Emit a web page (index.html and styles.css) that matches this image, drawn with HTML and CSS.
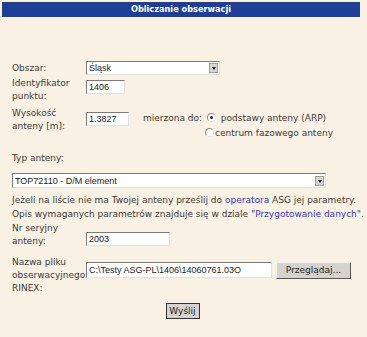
FILE: index.html
```html
<!DOCTYPE html>
<html>
<head>
    <meta charset="utf-8">
    <title>Obliczanie obserwacji</title>
    <link rel="stylesheet" href="styles.css">
</head>
<body>
<div class='title'>Obliczanie obserwacji</div>

<form class='calc'>
    <div class='row row_area'>
        <label class='lbl'>Obszar:</label>
        <div class='select area'><span>Śląsk</span><i class='arrow'></i></div>
    </div>

    <div class='row row_point'>
        <label class='lbl'>Identyfikator punktu:</label>
        <div class='field point'>1406</div>
    </div>

    <div class='row row_height'>
        <label class='lbl'>Wysokość anteny [m]:</label>
        <div class='field height'>1.3827</div>
        <span class='measured'>mierzona do:</span>
        <div class='radios'>
            <div class='radio'><i class='dot on'></i>&nbsp;podstawy anteny (ARP)</div>
            <div class='radio second'><i class='dot'></i>centrum fazowego anteny</div>
        </div>
    </div>

    <div class='type_lbl'>Typ anteny:</div>
    <div class='select antenna'><span>TOP72110 - D/M element</span><i class='arrow'></i></div>

    <p class='note'>
        Jeżeli na liście nie ma Twojej anteny prześlij do <a href='#'>operatora</a> ASG jej parametry.<br>
        Opis wymaganych parametrów znajduje się w dziale <a href='#'>"Przygotowanie danych"</a>.
    </p>

    <div class='row row_serial'>
        <label class='lbl'>Nr seryjny anteny:</label>
        <div class='field serial'>2003</div>
    </div>

    <div class='row row_file'>
        <label class='lbl'>Nazwa pliku obserwacyjnego RINEX:</label>
        <div class='field file'>C:\Testy ASG-PL\1406\14060761.03O</div>
        <div class='btn browse'>Przeglądaj...</div>
    </div>

    <div class='send'><div class='btn submit'>Wyślij</div></div>
</form>
</body>
</html>
```
FILE: styles.css
```css
body
{
    margin:0;
    background-color:#f9f2e4;
    font-family:"DejaVu Sans", Verdana, sans-serif;
    font-size:9px;
    color:#3a3a3a;
}

.title
{
    margin:2px 7px 0 2px;
    height:15px;
    line-height:15px;
    background-color:#1d3f96;
    color:white;
    font-size:8.2px;
    font-weight:bold;
    text-align:center;
}

.calc
{
    margin:0;
    padding:44px 0 0 12px;
}

.row
{
    display:flex;
    align-items:flex-start;
}

.lbl
{
    width:74px;
    flex:none;
    line-height:13px;
}

.field, .select
{
    box-sizing:border-box;
    height:14px;
    background:white;
    border:1px solid;
    border-color:#7a7a7a #e0e0e0 #e0e0e0 #7a7a7a;
    font-family:"Liberation Sans", Arial, sans-serif;
    font-size:9px;
    line-height:12px;
    padding-left:2px;
    color:#222;
    white-space:nowrap;
    overflow:hidden;
}

.select
{
    display:flex;
    justify-content:space-between;
    align-items:center;
    padding-right:1px;
}

.arrow
{
    width:9px;
    height:10px;
    background:#d8d5cf;
    border:1px solid #a09d98;
    box-sizing:border-box;
    position:relative;
}

.arrow::after
{
    content:'';
    position:absolute;
    left:2px;
    top:3px;
    border-left:2px solid transparent;
    border-right:2px solid transparent;
    border-top:3px solid #222;
}

.row_area
{
    align-items:center;
}

.area
{
    width:134px;
}

.row_point
{
    margin-top:2px;
}

.point
{
    width:39px;
    margin-top:3px;
}

.row_height
{
    margin-top:4px;
}

.height
{
    width:43px;
    margin-top:5px;
}

.measured
{
    margin:5px 0 0 14px;
    width:64px;
    line-height:13px;
}

.radios
{
    margin-top:3px;
}

.radio
{
    display:flex;
    align-items:center;
    height:15px;
}

.dot
{
    width:9px;
    height:9px;
    margin-right:2px;
    border-radius:50%;
    border:1px solid #8a8a8a;
    border-right-color:#e6e6e6;
    border-bottom-color:#e6e6e6;
    background:white;
    box-sizing:border-box;
    position:relative;
}

.second .dot
{
    margin:0 1px 0 -2px;
}

.dot.on::after
{
    content:'';
    position:absolute;
    left:2px;
    top:2px;
    width:3px;
    height:3px;
    border-radius:50%;
    background:#222;
}

.type_lbl
{
    margin-top:12px;
    line-height:13px;
}

.antenna
{
    margin-top:8px;
    width:314px;
    height:15px;
}

.note
{
    margin:5px 0 0 0;
    line-height:14px;
}

.note a
{
    color:#3535c8;
    text-decoration:none;
}

.row_serial
{
    margin-top:1px;
}

.serial
{
    width:84px;
    margin-top:10px;
}

.row_file
{
    margin-top:8px;
}

.file
{
    width:186px;
    height:16px;
    line-height:14px;
    margin-top:6px;
}

.btn
{
    box-sizing:border-box;
    background:#d6d3ce;
    border:1px solid;
    border-color:#f0f0f0 #555 #555 #f0f0f0;
    font-family:"DejaVu Sans", Verdana, sans-serif;
    text-align:center;
    color:#222;
}

.browse
{
    margin:6px 0 0 4px;
    width:75px;
    height:17px;
    line-height:15px;
}

.send
{
    display:flex;
    justify-content:center;
    margin:8px 0 0 -12px;
    padding-right:2px;
}

.submit
{
    width:34px;
    height:16px;
    line-height:14px;
    outline:1px solid #333;
    outline-offset:-1px;
}
```
